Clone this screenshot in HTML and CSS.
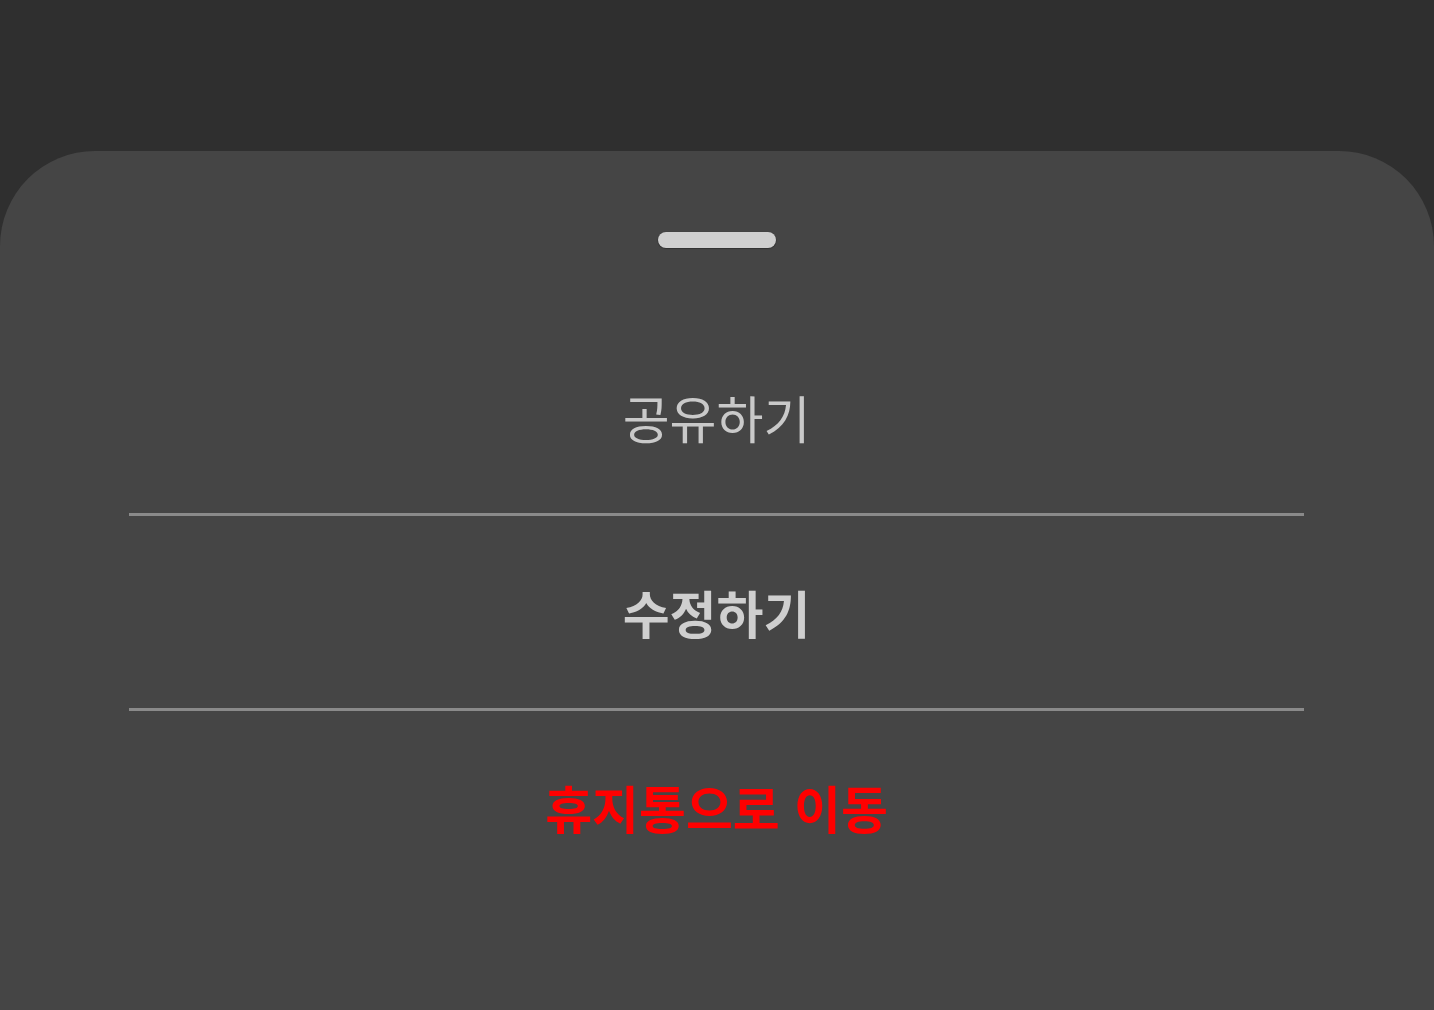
FILE: index.html
```html
<!DOCTYPE html>
<html lang="ko">
<head>
<meta charset="utf-8">
<link rel="stylesheet" href="styles.css">
</head>
<body>
<div class="screen">
  <div class="sheet">
    <div class="handle"></div>
    <ul class="menu">
      <li class="item item-share">공유하기</li>
      <li class="divider"></li>
      <li class="item item-edit">수정하기</li>
      <li class="divider"></li>
      <li class="item item-trash">휴지통으로 이동</li>
    </ul>
  </div>
</div>
</body>
</html>
```
FILE: styles.css
```css
html, body {
  margin: 0;
  padding: 0;
  background: #2f2f2f;
}
.screen {
  width: 1434px;
  height: 1010px;
  overflow: hidden;
  padding-top: 151px;
  box-sizing: border-box;
  font-family: "Noto Sans CJK KR", "Noto Sans", sans-serif;
}
.sheet {
  background: #454545;
  border-radius: 95px 95px 0 0;
  height: 859px;
  padding-top: 81px;
  box-sizing: border-box;
}
.handle {
  width: 118px;
  height: 16px;
  margin: 0 auto;
  background: #cfcfcf;
  border-radius: 8px;
  box-shadow: 0 0.5px 1px 0.5px rgba(0,0,0,0.3);
}
.menu {
  list-style: none;
  margin: 73px 130px 0 129px;
  padding: 0;
}
.item {
  height: 192px;
  display: flex;
  align-items: center;
  justify-content: center;
  font-size: 51px;
  color: #c9c9c9;
  line-height: 1;
}
.item-edit {
  font-weight: 700;
  color: #cfcfcf;
}
.item-trash {
  font-weight: 700;
  color: #ff0000;
}
.divider {
  height: 3px;
  background: #8a8a8a;
}
```
